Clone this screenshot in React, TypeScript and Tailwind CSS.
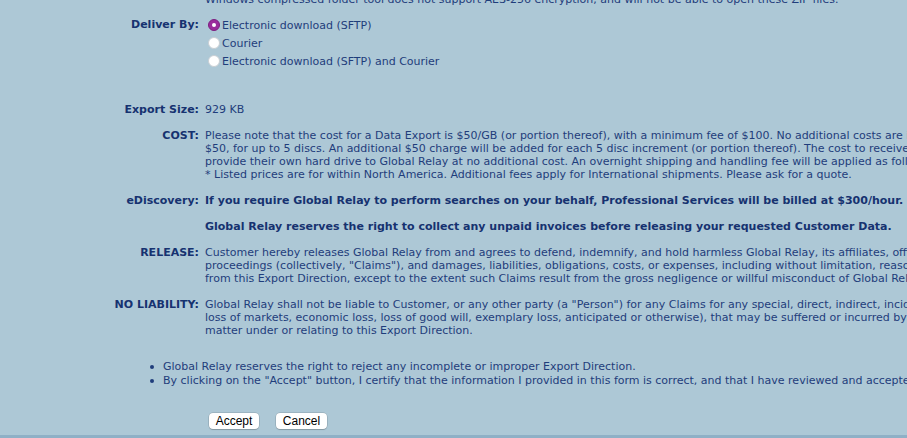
import React from "react";

const V = { fontFamily: '"DejaVu Sans", Verdana, sans-serif' };
const H = { fontFamily: '"Liberation Sans", Arial, Helvetica, sans-serif' };

function Radio({ checked }: { checked?: boolean }) {
  return checked ? (
    <span className="flex h-[12px] w-[12px] shrink-0 items-center justify-center rounded-full bg-[#9a2b9c] border border-[#7d1f80]">
      <span className="h-[4px] w-[4px] rounded-full bg-white" />
    </span>
  ) : (
    <span className="h-[12px] w-[12px] shrink-0 rounded-full bg-white border border-[#c9cfd4]" />
  );
}

function Row({
  label,
  className,
  labelClass,
  children,
}: {
  label: string;
  className?: string;
  labelClass?: string;
  children: React.ReactNode;
}) {
  return (
    <div className={"grid grid-cols-[199px_1fr] gap-x-[6px] " + (className ?? "")}>
      <div className={"text-right font-bold whitespace-nowrap text-[#163270] " + (labelClass ?? "")}>{label}</div>
      <div className="whitespace-nowrap">{children}</div>
    </div>
  );
}

export default function App() {
  return (
    <div
      className="flex h-[438px] w-[907px] flex-col overflow-hidden bg-[#adc8d6] text-[11px] leading-[13px] text-[#1f3d7b]"
      style={V}
    >
      <div className="flex-1 overflow-hidden">
        <div className="mt-[-7px] pl-[205px] whitespace-nowrap">
          Windows compressed folder tool does not support AES-256 encryption, and will not be able to open these ZIP files.
        </div>

        <Row label="Deliver By:" className="mt-[10px]" labelClass="pt-[2px]">
          <div className="flex flex-col pl-[3px]">
            <div className="flex h-[18px] items-center gap-[2px]">
              <Radio checked />
              <span>Electronic download (SFTP)</span>
            </div>
            <div className="flex h-[18px] items-center gap-[2px]">
              <Radio />
              <span>Courier</span>
            </div>
            <div className="flex h-[18px] items-center gap-[2px]">
              <Radio />
              <span>Electronic download (SFTP) and Courier</span>
            </div>
          </div>
        </Row>

        <Row label="Export Size:" className="mt-[33px]">
          929 KB
        </Row>

        <Row label="COST:" className="mt-[13px]">
          <div>Please note that the cost for a Data Export is $50/GB (or portion thereof), with a minimum fee of $100. No additional costs are incurred for electronic download.</div>
          <div>$50, for up to 5 discs. An additional $50 charge will be added for each 5 disc increment (or portion thereof). The cost to receive data on a hard drive is $300, or Customers may</div>
          <div>provide their own hard drive to Global Relay at no additional cost. An overnight shipping and handling fee will be applied as follows:</div>
          <div>* Listed prices are for within North America. Additional fees apply for International shipments. Please ask for a quote.</div>
        </Row>

        <Row label="eDiscovery:" className="mt-[13px]">
          <span className="font-bold text-[#163270]">
            If you require Global Relay to perform searches on your behalf, Professional Services will be billed at $300/hour.
          </span>
        </Row>

        <div className="mt-[13px] pl-[205px] whitespace-nowrap font-bold text-[#163270]">
          Global Relay reserves the right to collect any unpaid invoices before releasing your requested Customer Data.
        </div>

        <Row label="RELEASE:" className="mt-[13px]">
          <div>Customer hereby releases Global Relay from and agrees to defend, indemnify, and hold harmless Global Relay, its affiliates, officers, directors, employees and agents from any and all claims,</div>
          <div>proceedings (collectively, "Claims"), and damages, liabilities, obligations, costs, or expenses, including without limitation, reasonable legal fees, arising out of or relating to</div>
          <div>from this Export Direction, except to the extent such Claims result from the gross negligence or willful misconduct of Global Relay.</div>
        </Row>

        <Row label="NO LIABILITY:" className="mt-[13px]">
          <div>Global Relay shall not be liable to Customer, or any other party (a "Person") for any Claims for any special, direct, indirect, incidental, consequential or punitive damages, including</div>
          <div>loss of markets, economic loss, loss of good will, exemplary loss, anticipated or otherwise), that may be suffered or incurred by any Person arising out of any</div>
          <div>matter under or relating to this Export Direction.</div>
        </Row>

        <div className="mt-[23px] flex flex-col leading-[14px]">
          <div className="flex h-[14px] items-center whitespace-nowrap pl-[150px]">
            <span className="mr-[9px] h-[4px] w-[4px] shrink-0 rounded-full bg-[#1f3d7b]" />
            <span>Global Relay reserves the right to reject any incomplete or improper Export Direction.</span>
          </div>
          <div className="flex h-[14px] items-center whitespace-nowrap pl-[150px]">
            <span className="mr-[9px] h-[4px] w-[4px] shrink-0 rounded-full bg-[#1f3d7b]" />
            <span>By clicking on the "Accept" button, I certify that the information I provided in this form is correct, and that I have reviewed and accepted the terms above.</span>
          </div>
        </div>

        <div className="mt-[25px] flex gap-[17px] pl-[209px]" style={H}>
          <button className="h-[16px] w-[50px] rounded-[4px] bg-white text-[12px] leading-[16px] text-black shadow-[0_0_0_0.5px_rgba(0,0,0,0.2),0_1px_1px_rgba(0,0,0,0.15)]">
            Accept
          </button>
          <button className="h-[16px] w-[51px] rounded-[4px] bg-white text-[12px] leading-[16px] text-black shadow-[0_0_0_0.5px_rgba(0,0,0,0.2),0_1px_1px_rgba(0,0,0,0.15)]">
            Cancel
          </button>
        </div>
      </div>
      <div className="h-[3px] w-full shrink-0 bg-[#8fb0c6]" />
    </div>
  );
}
